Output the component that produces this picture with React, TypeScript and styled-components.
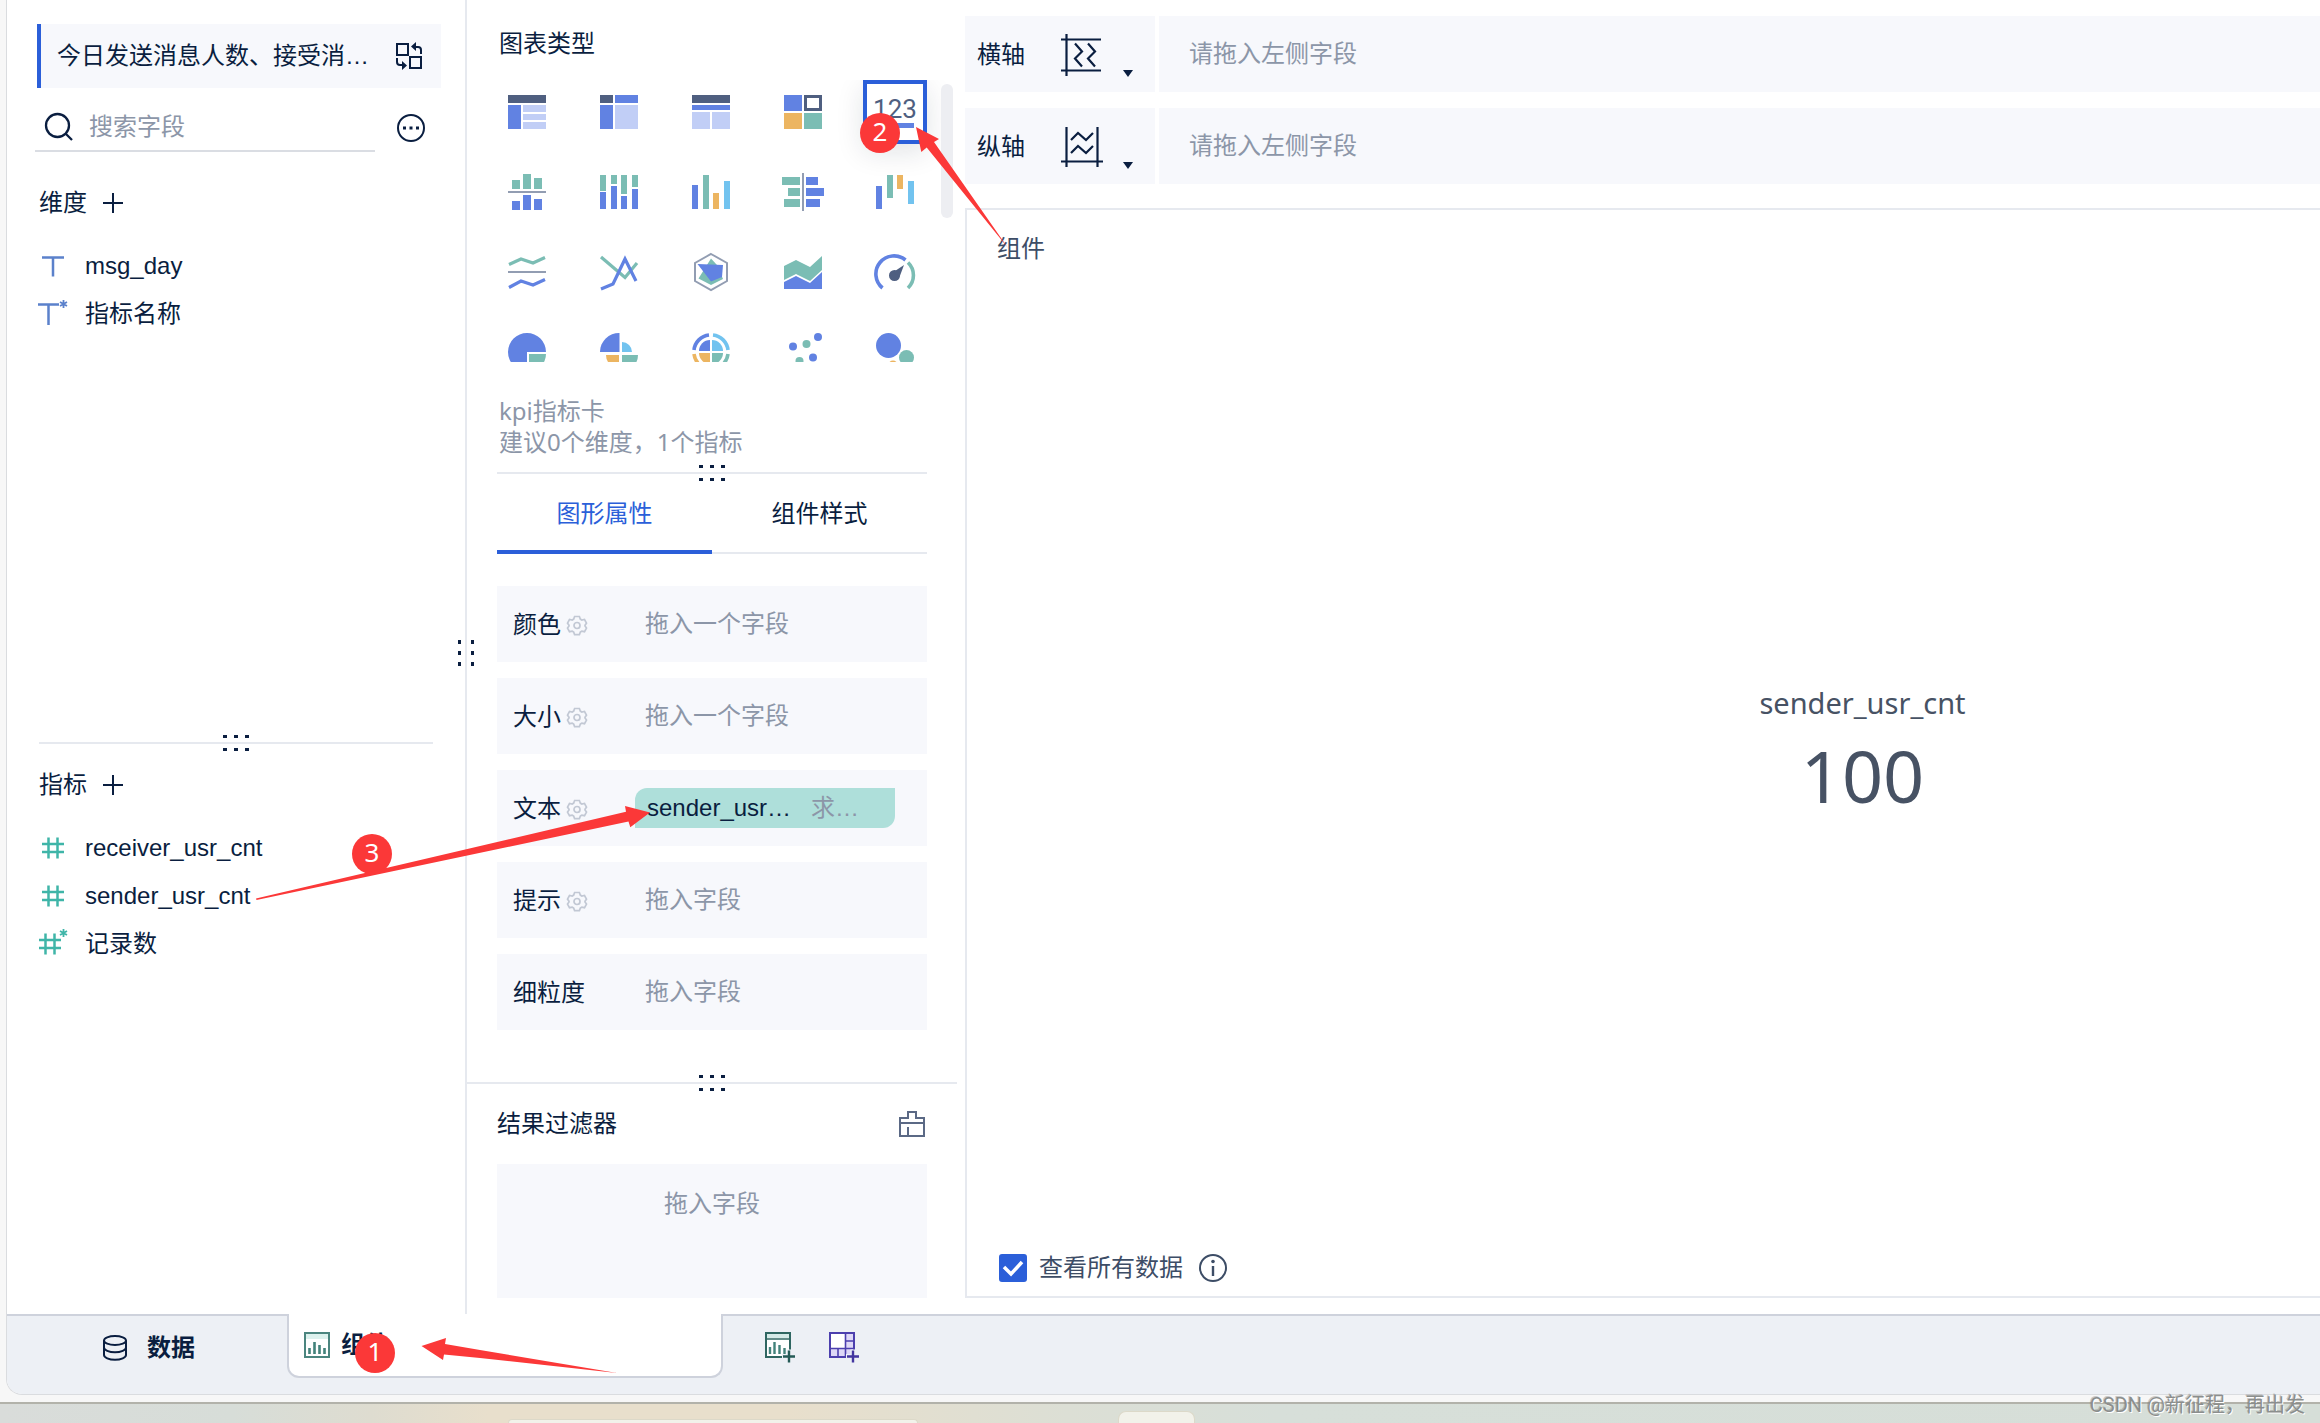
import React from "react";
import styled, { createGlobalStyle, css } from "styled-components";

const c = {
  ink: "#0a1e40",
  muted: "#8c96a8",
  slate: "#3d4d66",
  line: "#e6e9ef",
  fill: "#f7f8fc",
  blue: "#2b5fd9",
  red: "#fb3838",
  iBlue: "#6182e2",
  iLight: "#c1cef6",
  iDark: "#4f5f80",
  iTeal: "#7bbdb4",
  iOrange: "#ecb561",
  iSky: "#72c3ef",
  iGray: "#929db2",
};

const latin = `"Liberation Sans", "Noto Sans CJK SC", sans-serif`;
const humanist = `"Noto Sans", "Noto Sans CJK SC", sans-serif`;

const GlobalStyle = createGlobalStyle`
  *, *::before, *::after { box-sizing: border-box; }
  body {
    margin: 0;
    background: #f7f7f7;
    color: ${c.ink};
    font: 24px/32px ${latin};
    overflow: hidden;
  }
  button, input { font: inherit; color: inherit; }
  svg { display: block; flex: none; overflow: visible; }
  h1, h2, p, ul { margin: 0; padding: 0; font: inherit; }
`;

const Screen = styled.div`
  position: relative;
  display: flex;
  flex-direction: column;
  height: 100vh;
  overflow: hidden;
`;

const Frame = styled.div`
  flex: 1;
  min-height: 0;
  display: flex;
  padding: 0 0 7px 6px;
  background: #f7f7f7;
`;

const AppWindow = styled.div`
  flex: 1;
  min-width: 0;
  display: flex;
  flex-direction: column;
  border: solid #dadcdf;
  border-width: 0 0 1px 1px;
  border-radius: 0 0 0 16px;
  overflow: hidden;
  background: #fff;
`;

const Workspace = styled.div`
  flex: 1;
  min-height: 0;
  display: flex;
`;

const BareButton = styled.button`
  display: flex;
  align-items: center;
  justify-content: center;
  padding: 0;
  border: 0;
  background: none;
  cursor: pointer;
`;

/* ---- field list ---- */

const FieldPanel = styled.aside`
  position: relative;
  flex: none;
  width: 460px;
  display: flex;
  flex-direction: column;
  border-right: 2px solid ${c.line};
`;

const DatasetBar = styled.div`
  display: flex;
  align-items: center;
  height: 64px;
  margin: 24px 24px 0 30px;
  padding: 0 19px 0 16px;
  border-left: 4px solid ${c.blue};
  background: ${c.fill};
`;

const DatasetName = styled.h1`
  width: 314px;
  margin-right: auto;
  overflow: hidden;
  white-space: nowrap;
  text-overflow: ellipsis;
`;

const SearchRow = styled.div`
  display: flex;
  align-items: center;
  height: 64px;
  padding: 16px 40px 0 28px;
`;

const SearchBox = styled.label`
  display: flex;
  align-items: center;
  gap: 16px;
  width: 340px;
  height: 48px;
  margin-right: auto;
  padding: 0 10px;
  border-bottom: 2px solid #dadde3;
`;

const SearchInput = styled.input`
  flex: 1;
  min-width: 0;
  height: 32px;
  padding: 0;
  border: 0;
  outline: 0;
  background: none;
  &::placeholder { color: ${c.muted}; opacity: 1; }
`;

const FieldSection = styled.section<{ $grow: number; $top: number }>`
  flex: ${(p) => p.$grow} 1 0;
  min-height: 0;
  padding: ${(p) => p.$top}px 32px 0;
`;

const SectionHead = styled.div`
  display: flex;
  align-items: center;
  gap: 16px;
  height: 48px;
  margin-bottom: 15px;
`;

const FieldList = styled.ul`
  list-style: none;
`;

const FieldItem = styled.li`
  display: flex;
  align-items: center;
  height: 48px;
`;

const FieldIcon = styled.span`
  width: 46px;
`;

const Divider = styled.div<{ $left: number; $right: number }>`
  position: relative;
  flex: none;
  height: 2px;
  margin: 0 ${(p) => p.$right}px 0 ${(p) => p.$left}px;
  background: ${c.line};
`;

const Grip = styled.span<{ $vertical?: boolean; $x?: number }>`
  position: absolute;
  ${(p) =>
    p.$vertical
      ? css`
          top: 640px;
          right: -12px;
        `
      : css`
          top: -7px;
          left: ${p.$x ?? 184}px;
        `}
`;

/* ---- chart configuration ---- */

const ConfigPanel = styled.section`
  flex: none;
  width: 498px;
  display: flex;
  flex-direction: column;
`;

const ConfigTitle = styled.h2`
  height: 80px;
  padding: 28px 32px 0;
  flex: none;
`;

const ChartPicker = styled.div`
  display: flex;
  gap: 14px;
  flex: none;
  height: 282px;
  padding-left: 28px;
  overflow: hidden;
`;

const ChartGrid = styled.div`
  display: grid;
  grid-template-columns: repeat(5, 64px);
  grid-auto-rows: 64px;
  gap: 16px 28px;
`;

const ChartButton = styled(BareButton)<{ $active?: boolean }>`
  ${(p) =>
    p.$active &&
    css`
      border: 4px solid ${c.blue};
      background: #fff;
      box-shadow: 0 8px 28px rgba(20, 30, 50, 0.12);
    `}
`;

const ScrollThumb = styled.span`
  width: 12px;
  height: 134px;
  margin-top: 4px;
  border-radius: 6px;
  background: #edeef2;
`;

const Hint = styled.p`
  flex: none;
  height: 110px;
  padding: 33px 32px 0;
  color: ${c.muted};
  font-family: ${humanist};
  line-height: 31px;
`;

const Tabs = styled.div`
  display: flex;
  flex: none;
  height: 80px;
  margin: 0 38px 32px 30px;
`;

const Tab = styled(BareButton)<{ $active?: boolean }>`
  flex: 1;
  padding-top: ${(p) => (p.$active ? 4 : 2)}px;
  color: ${(p) => (p.$active ? c.blue : c.ink)};
  border-bottom: ${(p) => (p.$active ? `4px solid ${c.blue}` : `2px solid ${c.line}`)};
`;

const Slots = styled.div`
  display: flex;
  flex-direction: column;
  flex: 1 0 auto;
  gap: 16px;
  margin: 0 38px 0 30px;
`;

const Slot = styled.div`
  display: flex;
  align-items: center;
  height: 76px;
  padding-left: 16px;
  background: ${c.fill};
`;

const SlotLabel = styled.div`
  display: flex;
  align-items: center;
  gap: 6px;
  width: 122px;
  padding-top: 2px;
`;

const SlotHint = styled.span`
  padding-left: 10px;
  color: ${c.muted};
`;

const Pill = styled.div`
  display: flex;
  align-items: center;
  gap: 12px;
  width: 260px;
  height: 40px;
  padding: 0 12px;
  border-radius: 12px 0 12px 0;
  background: #aedfda;
`;

const PillText = styled.span<{ $w: number; $muted?: boolean }>`
  width: ${(p) => p.$w}px;
  overflow: hidden;
  white-space: nowrap;
  text-overflow: ellipsis;
  color: ${(p) => (p.$muted ? c.muted : c.ink)};
`;

const FilterHead = styled.div`
  display: flex;
  align-items: center;
  justify-content: space-between;
  flex: none;
  height: 80px;
  padding: 0 40px 0 30px;
`;

const FilterDrop = styled.div`
  display: flex;
  justify-content: center;
  flex: none;
  height: 134px;
  margin: 0 38px 16px 30px;
  padding-top: 24px;
  color: ${c.muted};
  background: ${c.fill};
`;

/* ---- canvas ---- */

const CanvasArea = styled.main`
  flex: 1;
  min-width: 0;
  display: flex;
  flex-direction: column;
  padding: 16px 0;
`;

const AxisRow = styled.div`
  display: flex;
  flex: none;
  height: 76px;
  margin-bottom: 16px;
  background: ${c.fill};
`;

const AxisHead = styled.div`
  display: flex;
  align-items: center;
  width: 194px;
  padding: 2px 0 0 12px;
  border-right: 4px solid #fff;
`;

const AxisButton = styled(BareButton)`
  align-items: flex-end;
  gap: 20px;
  margin-left: 36px;
`;

const AxisHint = styled.span`
  align-self: center;
  padding-left: 30px;
  color: ${c.muted};
`;

const Canvas = styled.section`
  flex: 1;
  min-height: 0;
  display: flex;
  flex-direction: column;
  margin-top: 8px;
  border: solid ${c.line};
  border-width: 2px 0 2px 2px;
`;

const CanvasTitle = styled.h2`
  padding: 23px 30px 0;
  color: ${c.slate};
`;

const Kpi = styled.div`
  flex: 1;
  display: flex;
  flex-direction: column;
  align-items: center;
  justify-content: center;
  gap: 12px;
  padding: 0 0 20px 438px;
  color: #475264;
  font-family: ${humanist};
`;

const KpiLabel = styled.span`
  font-size: 29px;
  line-height: 40px;
`;

const KpiValue = styled.strong`
  font-size: 72px;
  line-height: 80px;
  font-weight: 400;
`;

const CanvasFoot = styled.div`
  display: flex;
  align-items: center;
  gap: 16px;
  padding: 0 32px 12px;
  color: ${c.slate};
`;

const CheckLabel = styled.label`
  display: flex;
  align-items: center;
  gap: 12px;
`;

const CheckBox = styled.span`
  display: grid;
  place-items: center;
  > * { grid-area: 1 / 1; }
  svg { pointer-events: none; }
`;

const CheckInput = styled.input`
  appearance: none;
  width: 28px;
  height: 28px;
  margin: 0;
  border: 2px solid #b4bccb;
  border-radius: 3px;
  &:checked { border-color: ${c.blue}; background: ${c.blue}; }
`;

/* ---- bottom tabs ---- */

const BottomBar = styled.nav`
  display: flex;
  align-items: flex-start;
  flex: none;
  height: 80px;
  background: #edf0f5;
  font-weight: 700;
`;

const DataTab = styled(BareButton)`
  gap: 20px;
  width: 280px;
  height: 66px;
  padding-left: 4px;
  border-top: 2px solid #ced2dc;
`;

const ActiveTab = styled(BareButton)`
  justify-content: flex-start;
  gap: 11px;
  width: 436px;
  height: 64px;
  padding-left: 15px;
  border: solid #ced2dc;
  border-width: 0 2px 2px 2px;
  border-radius: 0 0 12px 12px;
  background: #fff;
`;

const AddGroup = styled.div`
  flex: 1;
  display: flex;
  align-items: center;
  gap: 34px;
  height: 64px;
  padding-left: 42px;
  border-top: 2px solid #ced2dc;
`;

/* ---- strip of desktop below the window ---- */

const Taskbar = styled.div`
  display: flex;
  align-items: flex-end;
  flex: none;
  height: 21px;
  padding-left: 508px;
  border-top: 2px solid #b2b2aa;
  background: linear-gradient(90deg, #d9dcda 0, #d7ddd8 10%, #dedcd0 16%, #e8dfcc 21%, #e8dfcc 34%, #dcdfd5 46%, #d7dfd9 55%, #d6ded8 100%);
`;

const TaskPill = styled.span<{ $w: number; $h: number; $r: number }>`
  width: ${(p) => p.$w}px;
  height: ${(p) => p.$h}px;
  margin-right: 200px;
  border: 1px solid #dcd9c9;
  border-bottom: 0;
  border-radius: ${(p) => p.$r}px ${(p) => p.$r}px 0 0;
  background: #f2f2ea;
`;

/* ---- overlaid notes ---- */

const Badge = styled.span<{ $x: number; $y: number }>`
  position: absolute;
  left: ${(p) => p.$x}px;
  top: ${(p) => p.$y}px;
  width: 40px;
  height: 40px;
  border-radius: 50%;
  background: ${c.red};
  color: #fff;
  font: 26px/36px ${humanist};
  text-align: center;
`;

const ArrowLayer = styled.svg`
  position: absolute;
  left: 0;
  top: 0;
  pointer-events: none;
`;

const Watermark = styled.span`
  position: absolute;
  right: 15px;
  bottom: 4px;
  color: #8b8e8d;
  font: 20px/28px Roboto, "Noto Sans CJK SC", sans-serif;
  text-shadow: 1px 1px 0 #fff, -1px -1px 0 rgba(90, 90, 90, 0.3);
`;

/* ---- drawings ---- */

const GripDots = () => (
  <svg width="26" height="16" fill={c.ink}>
    {[0, 11, 22].map((x) => (
      <React.Fragment key={x}>
        <rect x={x} y="0" width="4" height="3" />
        <rect x={x} y="13" width="4" height="3" />
      </React.Fragment>
    ))}
  </svg>
);

const GripDotsVertical = () => (
  <svg width="20" height="26" fill={c.ink}>
    {[0, 11, 22].map((y) => (
      <React.Fragment key={y}>
        <rect x="1" y={y} width="3" height="4" />
        <rect x="14" y={y} width="3" height="4" />
      </React.Fragment>
    ))}
  </svg>
);

const SwapIcon = () => (
  <svg width="26" height="28" fill="none" stroke={c.ink} strokeWidth="2">
    <rect x="1" y="2" width="11" height="11" />
    <rect x="14" y="15" width="11" height="11" />
    <path d="M25 12V8q0-3-3-3h-4M1 16v4q0 3 3 3h4" />
    <path d="M20 0v9l-5-4.500zM6 19v9l5-4.500z" fill={c.ink} stroke="none" />
  </svg>
);

const SearchIcon = () => (
  <svg width="28" height="28" fill="none" stroke={c.ink} strokeWidth="2.300">
    <circle cx="12.500" cy="12.500" r="11.500" />
    <path d="M20.500 20.500L27 27" />
  </svg>
);

const MoreIcon = () => (
  <svg width="28" height="28" fill="none" stroke={c.ink} strokeWidth="2">
    <circle cx="14" cy="14" r="13" />
    <path d="M6 14h3M12.500 14h3M19 14h3" strokeWidth="3" />
  </svg>
);

const PlusIcon = () => (
  <svg width="20" height="20" stroke={c.ink} strokeWidth="2">
    <path d="M10 0v20M0 10h20" />
  </svg>
);

const star = "M24.500-3v8M21-1l7 4M21 3l7-4";

const TextIcon = ({ derived }: { derived?: boolean }) => (
  <svg width="30" height="22" fill="none" stroke="#5b81cb" strokeWidth="2.500">
    {derived ? (
      <>
        <path d="M-1 1.500h21M9.500 1.500V22" />
        <path d={star} strokeWidth="1.800" />
      </>
    ) : (
      <path d="M3 2.500h22M14 2.500v19" />
    )}
  </svg>
);

const NumberIcon = ({ derived }: { derived?: boolean }) => (
  <svg width="30" height="24" fill="none" stroke="#3fb5a8" strokeWidth="2.500">
    {derived ? (
      <>
        <path d="M0 8h22M0 16h22M6.500 1.500v21M15.500 1.500v21" />
        <path d={star} strokeWidth="1.800" />
      </>
    ) : (
      <path d="M3 8h22M3 16h22M9.500 1.500v21M18.500 1.500v21" />
    )}
  </svg>
);

const GearIcon = () => (
  <svg width="20" height="21" viewBox="0 0 20 21" fill="none" stroke="#c2c8d4" strokeWidth="1.700">
    <path d="M7.600 1.500h4.800l.9 2.600 1.500.9 2.700-.5 2 3.600-1.500 2.100v.8l1.500 2.100-2 3.600-2.700-.5-1.500.9-.9 2.600H7.600l-.9-2.600-1.500-.9-2.700.5-2-3.600L2 11v-.8L.5 8.100l2-3.600 2.700.5 1.500-.9z" />
    <circle cx="10" cy="10.500" r="3" />
  </svg>
);

const ClearIcon = () => (
  <svg width="26" height="26" fill="none" stroke="#5b6985" strokeWidth="2">
    <path d="M1 25V7h8V1h8v6h8v18zM1 12h24M9 16v9" />
  </svg>
);

const AxisIcon = ({ kind }: { kind: "x" | "y" }) => (
  <svg width="42" height="42" fill="none" stroke={c.ink} strokeWidth="2.200">
    {kind === "x" ? (
      <path d="M5.500 0v42M0 5.500h40M0 36.500h40M14 9.500l7 8-7 7 7 8M27 9.500l7 8-7 7 7 8" />
    ) : (
      <path d="M5.500 1v40M36.500 1v40M0 35.500h42M10 14l7-7 8 7 7-7M10 27l7-7 8 7 7-7" />
    )}
  </svg>
);

const Caret = () => (
  <svg width="10" height="7" fill={c.ink}>
    <path d="M0 1h10L5 8z" />
  </svg>
);

const InfoIcon = () => (
  <svg width="28" height="28" fill="none" stroke={c.slate} strokeWidth="2">
    <circle cx="14" cy="14" r="13" />
    <path d="M14 12v10" strokeWidth="2.400" />
    <circle cx="14" cy="7.500" r="1.800" fill={c.slate} stroke="none" />
  </svg>
);

const DatabaseIcon = () => (
  <svg width="24" height="26" fill="none" stroke={c.ink} strokeWidth="2">
    <ellipse cx="12" cy="5.500" rx="11" ry="4.500" />
    <path d="M1 5.500V20c0 2.500 5 4.800 11 4.800s11-2.300 11-4.800V5.500M1 12.500c0 2.500 5 4.800 11 4.800s11-2.300 11-4.800" />
  </svg>
);

const ComponentIcon = () => (
  <svg width="26" height="26">
    <rect x="1" y="1" width="24" height="24" fill="#fff" stroke="#4b857f" strokeWidth="2" />
    <rect x="2" y="2" width="22" height="5" fill="#dcf1ed" />
    <path d="M5.500 22v-6M10.500 22V10M15.500 22v-9M20.500 22v-6" stroke="#42827b" strokeWidth="2.600" />
  </svg>
);

const AddComponentIcon = () => (
  <svg width="30" height="30">
    <rect x="1" y="1" width="24" height="24" fill="#fff" stroke="#2f6661" strokeWidth="2" />
    <rect x="2" y="2" width="22" height="4" fill="#d5eae7" />
    <path d="M2 7h22" stroke="#2f6661" strokeWidth="1.500" />
    <path d="M5 22v-7M9.500 22V10M14.500 22V13M19.500 22v-6" stroke="#42827b" strokeWidth="2.400" />
    <path d="M17 24.500h14M24 17.500v14" stroke="#edf0f5" strokeWidth="5" />
    <path d="M18 24.500h12M24 18.500v12" stroke="#255a56" strokeWidth="2.400" />
  </svg>
);

const AddDashboardIcon = () => (
  <svg width="30" height="30">
    <rect x="1" y="1" width="24" height="24" fill="#ded8f7" stroke="#4c3fae" strokeWidth="2" />
    <rect x="2" y="2" width="14" height="14" fill="#fff" />
    <path d="M16.500 1v24M1 16.500h24M17 9h8M9 17v8" stroke="#4c3fae" strokeWidth="1.600" />
    <path d="M17 24.500h14M24 17.500v14" stroke="#edf0f5" strokeWidth="5" />
    <path d="M18 24.500h12M24 18.500v12" stroke="#43369f" strokeWidth="2.400" />
  </svg>
);

type Bar = [number, number, number, number, string];

const Bars = ({ items }: { items: Bar[] }) => (
  <>
    {items.map(([x, y, w, h, fill], i) => (
      <rect key={i} x={x} y={y} width={w} height={h} fill={fill} />
    ))}
  </>
);

const { iBlue: B, iLight: L, iDark: D, iTeal: T, iOrange: O, iSky: S, iGray: G } = c;

const charts: { name: string; art: React.ReactNode; active?: boolean }[] = [
  { name: "分组表", art: <Bars items={[[0, 2, 38, 8, D], [0, 12, 13, 24, B], [15, 12, 23, 7, L], [15, 21, 23, 6, L], [15, 29, 23, 7, L]]} /> },
  { name: "交叉表", art: <Bars items={[[0, 2, 13, 8, D], [15, 2, 23, 8, B], [0, 12, 13, 24, B], [15, 12, 23, 24, L]]} /> },
  { name: "明细表", art: <Bars items={[[0, 2, 38, 8, D], [0, 12, 38, 5, B], [0, 19, 18, 17, L], [20, 19, 18, 17, L]]} /> },
  {
    name: "颜色表格",
    art: (
      <>
        <Bars items={[[0, 2, 18, 16, B], [0, 20, 18, 16, O], [20, 20, 18, 16, T]]} />
        <rect x="21.500" y="3.500" width="15" height="13" fill="#fff" stroke={D} strokeWidth="3" />
      </>
    ),
  },
  {
    name: "kpi指标卡",
    active: true,
    art: (
      <>
        <text x="19" y="25" textAnchor="middle" fontFamily="Roboto, sans-serif" fontSize="26" fill={D}>123</text>
        <Bars items={[[0, 30, 38, 5, B]]} />
      </>
    ),
  },
  {
    name: "对比柱状图",
    art: <Bars items={[[4, 7, 8, 9, T], [15, 1, 8, 15, T], [26, 5, 8, 11, T], [0, 18, 38, 2, G], [4, 28, 8, 9, B], [15, 22, 8, 15, B], [26, 26, 8, 11, B]]} />,
  },
  {
    name: "堆积柱状图",
    art: <Bars items={[[0, 2, 6, 16, T], [11, 2, 6, 9, T], [21, 2, 6, 19, T], [32, 2, 6, 12, T], [0, 19, 6, 17, B], [11, 13, 6, 23, B], [21, 23, 6, 13, B], [32, 16, 6, 20, B]]} />,
  },
  { name: "分区柱形图", art: <Bars items={[[0, 12, 6, 24, B], [11, 2, 6, 34, T], [21, 20, 6, 16, O], [32, 8, 6, 28, S]]} /> },
  {
    name: "对比条形图",
    art: <Bars items={[[-2, 4, 18, 8, T], [4, 15, 12, 8, T], [0, 26, 16, 8, T], [18, 0, 2, 38, G], [22, 4, 12, 8, B], [22, 15, 18, 8, B], [22, 26, 14, 8, B]]} />,
  },
  { name: "瀑布图", art: <Bars items={[[0, 13, 6, 23, B], [11, 2, 6, 23, T], [21, 2, 6, 14, O], [32, 8, 6, 23, S]]} /> },
  {
    name: "分区折线图",
    art: (
      <g fill="none" strokeWidth="3.200">
        <path d="M1 11.500L13 6l12 4L37 4.500" stroke={T} />
        <path d="M0 19h38" stroke={G} strokeWidth="2" />
        <path d="M1 34.500L13 28l12 4 12-5.500" stroke={B} />
      </g>
    ),
  },
  {
    name: "多系列折线图",
    art: (
      <g fill="none" strokeWidth="3.200">
        <path d="M1 4l24 20.500L37 10" stroke={T} />
        <path d="M1 36l12-5L25 6l11 22" stroke={B} />
      </g>
    ),
  },
  {
    name: "雷达图",
    art: (
      <>
        <path d="M19 1l16 9v18l-16 9-16-9V10z" fill="none" stroke={G} strokeWidth="2" />
        <path d="M19 5.500L6.500 25.500 19 32l12-6-6-14z" fill={T} />
        <path d="M5.500 11L31 12l-1 12-11 4.500z" fill={B} />
      </>
    ),
  },
  {
    name: "范围面积图",
    art: (
      <>
        <path d="M0 13l12-6 14 7L38 3v14L26 28l-14-7-12 6z" fill={T} />
        <path d="M0 29l12-6 14 7 12-11v17H0z" fill={B} />
      </>
    ),
  },
  {
    name: "仪表盘",
    art: (
      <>
        <g fill="none" strokeWidth="3.600">
          <path d="M6.500 35A17.700 17.700 0 0 1 29.500 7" stroke={B} />
          <path d="M32 9.500a17.700 17.700 0 0 1 0 25.500" stroke={T} />
        </g>
        <circle cx="18.500" cy="22.500" r="5.500" fill={D} />
        <path d="M28 12l-4.500 12-6-5z" fill={D} />
      </>
    ),
  },
  {
    name: "饼图",
    art: (
      <>
        <path d="M19 38A19 19 0 1 1 38 19H19z" fill={B} />
        <path d="M21 21h17a17 17 0 0 1-17 17z" fill={T} />
      </>
    ),
  },
  {
    name: "玫瑰图",
    art: (
      <>
        <path d="M0 19A19 19 0 0 1 19.500 0v19z" fill={B} />
        <path d="M22 9a10 10 0 0 1 10 10H22z" fill={S} />
        <path d="M6 22h13v13A13 13 0 0 1 6 22z" fill={O} />
        <path d="M22 22h16a16 16 0 0 1-16 16z" fill={T} />
      </>
    ),
  },
  {
    name: "多层饼图",
    art: (
      <>
        <g fill="none" strokeWidth="3.600">
          <path d="M2 17A17 17 0 0 1 17 2" stroke={B} />
          <path d="M21 2a17 17 0 0 1 15 15" stroke={S} />
          <path d="M2 21a17 17 0 0 0 15 15" stroke={O} />
          <path d="M36 21a17 17 0 0 1-15 15" stroke={T} />
        </g>
        <path d="M7 18A11 11 0 0 1 18 7v11z" fill={B} />
        <path d="M20 7a11 11 0 0 1 11 11H20z" fill={S} />
        <path d="M7 20h11v11A11 11 0 0 1 7 20z" fill={O} />
        <path d="M20 20h11a11 11 0 0 1-11 11z" fill={T} />
      </>
    ),
  },
  {
    name: "散点图",
    art: (
      <>
        <circle cx="34" cy="4" r="4" fill={B} />
        <circle cx="22.500" cy="11" r="4" fill={T} />
        <circle cx="9" cy="13.500" r="4" fill={B} />
        <circle cx="29" cy="24.500" r="4" fill={B} />
        <circle cx="15.500" cy="28" r="4" fill={T} />
      </>
    ),
  },
  {
    name: "聚合气泡图",
    art: (
      <>
        <circle cx="12.500" cy="12.500" r="12.500" fill={B} />
        <circle cx="30.500" cy="24.500" r="7.500" fill={T} />
        <circle cx="17" cy="32" r="4.500" fill={O} />
      </>
    ),
  },
];

const slots = [
  { label: "颜色", hint: "拖入一个字段", gear: true },
  { label: "大小", hint: "拖入一个字段", gear: true },
  { label: "文本", gear: true },
  { label: "提示", hint: "拖入字段", gear: true },
  { label: "细粒度", hint: "拖入字段", gear: false },
];

const axes: { label: string; kind: "x" | "y" }[] = [
  { label: "横轴", kind: "x" },
  { label: "纵轴", kind: "y" },
];

export default function App() {
  return (
    <Screen>
      <GlobalStyle />
      <Frame>
        <AppWindow>
          <Workspace>
            <FieldPanel>
              <DatasetBar>
                <DatasetName>今日发送消息人数、接受消息人数</DatasetName>
                <BareButton aria-label="切换数据"><SwapIcon /></BareButton>
              </DatasetBar>
              <SearchRow>
                <SearchBox>
                  <SearchIcon />
                  <SearchInput type="text" aria-label="搜索字段" placeholder="搜索字段" />
                </SearchBox>
                <BareButton aria-label="更多"><MoreIcon /></BareButton>
              </SearchRow>
              <FieldSection $grow={563} $top={27}>
                <SectionHead>
                  <h2>维度</h2>
                  <BareButton aria-label="添加维度"><PlusIcon /></BareButton>
                </SectionHead>
                <FieldList>
                  <FieldItem><FieldIcon><TextIcon /></FieldIcon>msg_day</FieldItem>
                  <FieldItem><FieldIcon><TextIcon derived /></FieldIcon>指标名称</FieldItem>
                </FieldList>
              </FieldSection>
              <Divider $left={32} $right={32}>
                <Grip><GripDots /></Grip>
              </Divider>
              <FieldSection $grow={553} $top={17}>
                <SectionHead>
                  <h2>指标</h2>
                  <BareButton aria-label="添加指标"><PlusIcon /></BareButton>
                </SectionHead>
                <FieldList>
                  <FieldItem><FieldIcon><NumberIcon /></FieldIcon>receiver_usr_cnt</FieldItem>
                  <FieldItem><FieldIcon><NumberIcon /></FieldIcon>sender_usr_cnt</FieldItem>
                  <FieldItem><FieldIcon><NumberIcon derived /></FieldIcon>记录数</FieldItem>
                </FieldList>
              </FieldSection>
              <Grip $vertical><GripDotsVertical /></Grip>
            </FieldPanel>

            <ConfigPanel>
              <ConfigTitle>图表类型</ConfigTitle>
              <ChartPicker>
                <ChartGrid>
                  {charts.map((chart) => (
                    <ChartButton key={chart.name} aria-label={chart.name} $active={chart.active}>
                      <svg width="38" height="38">{chart.art}</svg>
                    </ChartButton>
                  ))}
                </ChartGrid>
                <ScrollThumb />
              </ChartPicker>
              <Hint>kpi指标卡<br />建议0个维度，1个指标</Hint>
              <Divider $left={30} $right={38}>
                <Grip $x={202}><GripDots /></Grip>
              </Divider>
              <Tabs role="tablist">
                <Tab role="tab" aria-selected $active>图形属性</Tab>
                <Tab role="tab" aria-selected={false}>组件样式</Tab>
              </Tabs>
              <Slots>
                {slots.map((slot) => (
                  <Slot key={slot.label}>
                    <SlotLabel>
                      {slot.label}
                      {slot.gear && <BareButton aria-label={`${slot.label}设置`}><GearIcon /></BareButton>}
                    </SlotLabel>
                    {slot.hint ? (
                      <SlotHint>{slot.hint}</SlotHint>
                    ) : (
                      <Pill>
                        <PillText $w={152}>sender_usr_cnt</PillText>
                        <PillText $w={50} $muted>求和值</PillText>
                      </Pill>
                    )}
                  </Slot>
                ))}
              </Slots>
              <Divider $left={0} $right={8}>
                <Grip $x={232}><GripDots /></Grip>
              </Divider>
              <FilterHead>
                <h2>结果过滤器</h2>
                <BareButton aria-label="清空"><ClearIcon /></BareButton>
              </FilterHead>
              <FilterDrop>拖入字段</FilterDrop>
            </ConfigPanel>

            <CanvasArea>
              {axes.map((axis) => (
                <AxisRow key={axis.kind}>
                  <AxisHead>
                    {axis.label}
                    <AxisButton aria-label={`${axis.label}设置`}>
                      <AxisIcon kind={axis.kind} />
                      <Caret />
                    </AxisButton>
                  </AxisHead>
                  <AxisHint>请拖入左侧字段</AxisHint>
                </AxisRow>
              ))}
              <Canvas>
                <CanvasTitle>组件</CanvasTitle>
                <Kpi>
                  <KpiLabel>sender_usr_cnt</KpiLabel>
                  <KpiValue>100</KpiValue>
                </Kpi>
                <CanvasFoot>
                  <CheckLabel>
                    <CheckBox>
                      <CheckInput type="checkbox" defaultChecked />
                      <svg width="20" height="16" fill="none" stroke="#fff" strokeWidth="3.500">
                        <path d="M1 7l7 7L19 2" />
                      </svg>
                    </CheckBox>
                    查看所有数据
                  </CheckLabel>
                  <BareButton aria-label="说明"><InfoIcon /></BareButton>
                </CanvasFoot>
              </Canvas>
            </CanvasArea>
          </Workspace>

          <BottomBar>
            <DataTab><DatabaseIcon />数据</DataTab>
            <ActiveTab><ComponentIcon />组件</ActiveTab>
            <AddGroup>
              <BareButton aria-label="添加组件"><AddComponentIcon /></BareButton>
              <BareButton aria-label="添加仪表板"><AddDashboardIcon /></BareButton>
            </AddGroup>
          </BottomBar>
        </AppWindow>
      </Frame>

      <Taskbar>
        <TaskPill $w={410} $h={4} $r={20} />
        <TaskPill $w={77} $h={12} $r={8} />
      </Taskbar>

      <Badge $x={355} $y={1333}>1</Badge>
      <Badge $x={860} $y={113}>2</Badge>
      <Badge $x={352} $y={834}>3</Badge>
      <ArrowLayer width="1010" height="1380" fill={c.red}>
        <path d="M916 127l23 12-5 3 74 106-81.300-100.500-5.400 4.500z" />
        <path d="M650 812.500l-25-6.500 1 5.700L256 898.500l.5 1.500L628.500 821.500l1.800 5.800z" />
        <path d="M421.500 1346l24.500-8-1 6 35 6 137 23-137-15-36-3.500-1 5.500z" />
      </ArrowLayer>
      <Watermark>CSDN @新征程，再出发</Watermark>
    </Screen>
  );
}
